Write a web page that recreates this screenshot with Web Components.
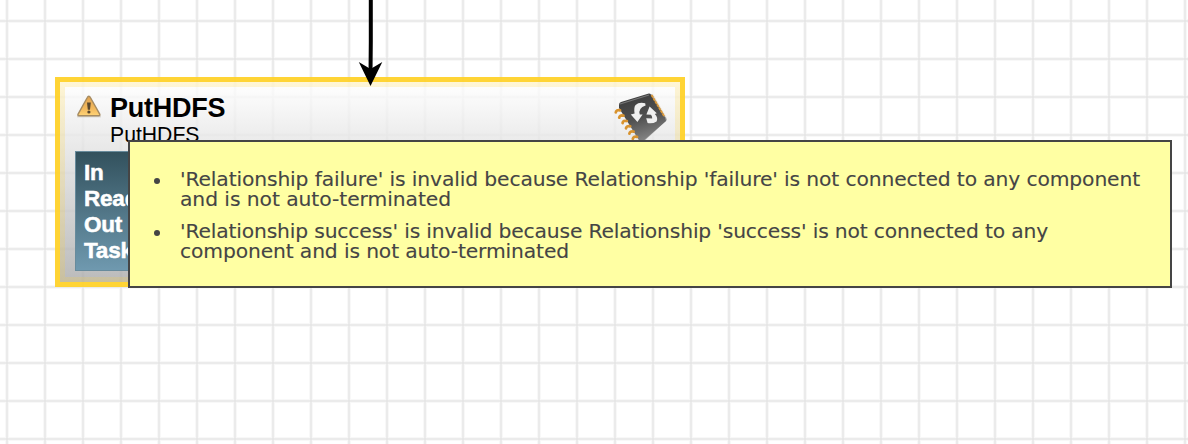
<!DOCTYPE html>
<html lang="en">
<head>
<meta charset="utf-8">
<title>Flow canvas</title>
<style>
html, body { margin: 0; width: 100%; height: 100%; overflow: hidden; background: #fff; }
</style>
</head>
<body>
<flow-canvas>
  <flow-connection></flow-connection>
  <flow-processor>
    <span slot="name">PutHDFS</span>
    <span slot="type">PutHDFS</span>
    <span slot="stat">In</span>
    <span slot="stat">Read/Write</span>
    <span slot="stat">Out</span>
    <span slot="stat">Tasks/Time</span>
  </flow-processor>
  <flow-tooltip>
    <flow-error>
      <fit-line width="960">'Relationship failure' is invalid because Relationship 'failure' is not connected to any component</fit-line>
      <fit-line width="271">and is not auto-terminated</fit-line>
    </flow-error>
    <flow-error>
      <fit-line width="868">'Relationship success' is invalid because Relationship 'success' is not connected to any</fit-line>
      <fit-line width="389">component and is not auto-terminated</fit-line>
    </flow-error>
  </flow-tooltip>
</flow-canvas>
<script>
function define(name, html, ready) {
  customElements.define(name, class extends HTMLElement {
    constructor() {
      super();
      this.attachShadow({ mode: 'open' }).innerHTML = html;
    }
    connectedCallback() { if (ready) ready(this); }
  });
}

define('flow-canvas', `
<style>
:host { display: block; position: relative; width: 1188px; height: 444px; overflow: hidden; background: #fff; }
.grid { display: block; }
</style>
<svg class="grid" width="1188" height="444">
  <defs><pattern id="g" x="5" y="19" width="38" height="38" patternUnits="userSpaceOnUse">
    <path fill="#f8f8f8" d="M0 0H38V4H0ZM0 0H4V38H0Z"/>
    <path fill="#ebebeb" d="M0 1H38V3H0ZM1 0H3V38H1Z"/>
    <path fill="#e6e6e6" d="M1 1H3V3H1Z"/>
  </pattern></defs>
  <rect width="1188" height="444" fill="url(#g)"/>
</svg>
<slot></slot>`);

define('flow-connection', `
<style>
:host { position: absolute; left: 350px; top: 0; z-index: 2; }
svg { display: block; }
</style>
<svg width="40" height="90">
  <path d="M20.8 0V42L20.5 75" fill="none" stroke="#000" stroke-width="4"/>
  <path d="M8.8 62L20.5 69L32.3 62L20.5 86Z"/>
</svg>`);

define('warning-icon', `
<style>:host { display: block; } svg { display: block; }</style>
<svg width="26" height="24" viewBox="0 0 26 24">
  <defs><linearGradient id="w" x2="0" y2="1"><stop stop-color="#e0a350"/><stop offset=".65" stop-color="#f3ba5e"/><stop offset="1" stop-color="#ffd477"/></linearGradient></defs>
  <path d="M1 22.6H25" stroke="#d8d6d2" stroke-width="1.6"/>
  <path d="M12.8 2.3Q13.8 2.3 14.4 3.5L23.7 20.1Q24.3 21.7 22.8 21.7H3Q1.4 21.7 2.1 20.1L11.3 3.5Q11.9 2.3 12.8 2.3Z" fill="url(#w)" stroke="#a58b62" stroke-width="1.4"/>
  <path d="M11 8.5H14.8L14 15.8H11.8Z" fill="#5a472d"/>
  <circle cx="12.9" cy="18" r="1.6" fill="#5a472d"/>
</svg>`);

define('processor-icon', `
<style>:host { display: block; } svg { display: block; }</style>
<svg width="56" height="54" viewBox="0 0 56 54">
  <defs><linearGradient id="b" x1=".3" y1="0" x2=".6" y2="1"><stop stop-color="#3c3c3c"/><stop offset=".5" stop-color="#505050"/><stop offset="1" stop-color="#8a8a8a"/></linearGradient></defs>
  <path d="M39 1L41 2L54 24L55 27L30 50L27 47Z" fill="#aaa"/>
  <path d="M41 1.6L54 24" stroke="#f1e8d8" stroke-width="1"/>
  <path d="M7 12Q7 9.5 9 9L36 .7Q38 0 39.2 2L53.3 25L54 28L30 49Q28.5 50 27.4 48L7 15Z" fill="url(#b)"/>
  <path d="M39.5 2L52.3 23.5" stroke="#df9a37" stroke-width="1.8" stroke-dasharray="3 .6"/>
  <path d="M8 11L37 2" stroke="#777" stroke-width="1.2"/>
  <g fill="none" stroke="#d8932e" stroke-width="2.8" stroke-linecap="round">
    <path d="M3.8 19.4Q4.2 16.6 8 17.4M7.2 24.7Q7.6 21.9 11.4 22.7M10.6 30Q11 27.2 14.8 28M14 35.3Q14.4 32.5 18.2 33.3M17.4 40.6Q17.8 37.8 21.6 38.6M20.8 45.9Q21.2 43.1 25 43.9"/>
  </g>
  <g fill="#efefef">
    <path d="M33.6 12.4L33.2 10.2Q27 8.6 23.6 12Q21.6 14.2 22.6 20.6L18.8 21.4L25.4 29L30.6 21.6L27.8 21.4Q25.8 15.2 33.6 12.4Z"/>
    <path d="M37.6 13.6L44.8 20.2L42.8 21Q46.4 24.6 44.6 28.4Q40.6 31 35.6 30L34.2 25.2L40.2 25.6Q40.4 23.4 39 21.8L34.4 21.6Z"/>
  </g>
</svg>`);

define('flow-processor', `
<style>
:host { position: absolute; left: 55px; top: 77px; width: 630px; height: 210px; box-sizing: border-box; border: 5px solid rgba(255,209,38,.93); font-family: "Liberation Sans", Arial, sans-serif; color: #000; }
.body { height: 100%; box-sizing: border-box; border: 5px solid rgba(255,211,49,.2); background: linear-gradient(rgba(255,255,255,.8), rgba(170,170,170,.8)) border-box; background-origin: border-box; padding: 8px 10px 6px; }
.head { display: grid; grid-template-columns: 35px 1fr 56px; height: 56px; }
warning-icon { margin: -1px 0 0 1px; }
processor-icon { margin: -2px 0 0 3px; }
.name { font-size: 27px; font-weight: 700; line-height: 30px; margin-top: -2px; letter-spacing: -.25px; }
.type { font-size: 21.2px; line-height: 24px; }
.stats { box-sizing: border-box; height: 120px; padding: 8px 0 0 8px; display: flex; flex-direction: column; border: 1px solid #688b9c; background: linear-gradient(#32515d, #6f99af); color: #fff; font-size: 22.5px; font-weight: 700; line-height: 26px; letter-spacing: -.2px; -webkit-text-stroke: .5px #fff; }
</style>
<div class="body">
  <div class="head">
    <warning-icon></warning-icon>
    <div><div class="name"><slot name="name"></slot></div><div class="type"><slot name="type"></slot></div></div>
    <processor-icon></processor-icon>
  </div>
  <div class="stats"><slot name="stat"></slot></div>
</div>`);

define('flow-tooltip', `
<style>
:host { position: absolute; left: 128px; top: 140px; z-index: 3; width: 1044px; height: 148px; box-sizing: border-box; border: 2px solid #454545; background: #ffffa3; padding: 27px 24px; display: flex; flex-direction: column; gap: 12px; font: 20.3px/20px Verdana, "DejaVu Sans", sans-serif; color: #454545; -webkit-text-stroke: .12px #454545; }
</style><slot></slot>`);

define('flow-error', `
<style>
:host { display: grid; grid-template-columns: 6px auto; column-gap: 20px; }
i { width: 6px; height: 6px; border-radius: 50%; background: #454545; margin-top: 9px; }
</style><i></i><div><slot></slot></div>`);

/* One line of text, tracked so that it spans the width it is given. */
define('fit-line', `
<style>:host { display: block; white-space: nowrap; } span { display: inline-block; vertical-align: top; }</style>
<span><slot></slot></span>`, el => {
  const span = el.shadowRoot.querySelector('span');
  const natural = span.getBoundingClientRect().width;
  span.style.letterSpacing = (el.getAttribute('width') - natural) / el.textContent.length + 'px';
});
</script>
</body>
</html>
